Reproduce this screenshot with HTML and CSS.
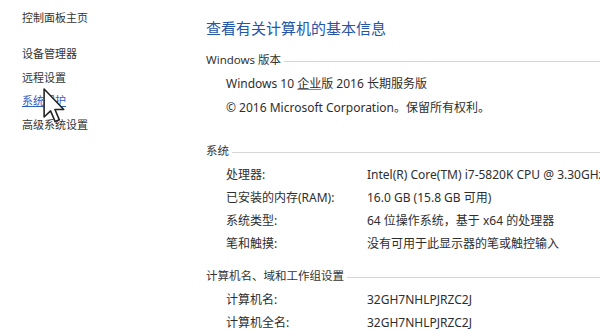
FILE: index.html
```html
<!DOCTYPE html>
<html lang="zh-CN">
<head>
<meta charset="utf-8">
<title>系统</title>
<link rel="stylesheet" href="styles.css">
</head>
<body>
<div class="page">
  <nav class="sidebar">
    <div class="nav-home">控制面板主页</div>
    <ul class="nav-list">
      <li>设备管理器</li>
      <li>远程设置</li>
      <li class="nav-link">系统保护</li>
      <li>高级系统设置</li>
    </ul>
  </nav>
  <main class="main">
    <h1 class="title">查看有关计算机的基本信息</h1>

    <section class="section sec-edition">
      <div class="sec-head"><span>Windows 版本</span><i class="rule"></i></div>
      <div class="line">Windows 10 <span class="ul">企业</span>版 2016 长期服务版</div>
      <div class="line">© 2016 Microsoft Corporation。保留所有权利。</div>
    </section>

    <section class="section sec-system">
      <div class="sec-head"><span>系统</span><i class="rule"></i></div>
      <div class="row"><span class="lbl">处理器:</span><span class="val">Intel(R) Core(TM) i7-5820K CPU @ 3.30GHz</span></div>
      <div class="row"><span class="lbl">已安装的内存(RAM):</span><span class="val">16.0 GB (15.8 GB 可用)</span></div>
      <div class="row"><span class="lbl">系统类型:</span><span class="val">64 位操作系统，基于 x64 的处理器</span></div>
      <div class="row"><span class="lbl">笔和触摸:</span><span class="val">没有可用于此显示器的笔或触控输入</span></div>
    </section>

    <section class="section sec-name">
      <div class="sec-head"><span>计算机名、域和工作组设置</span><i class="rule"></i></div>
      <div class="row"><span class="lbl">计算机名:</span><span class="val">32GH7NHLPJRZC2J</span></div>
      <div class="row"><span class="lbl">计算机全名:</span><span class="val">32GH7NHLPJRZC2J</span></div>
    </section>
  </main>
</div>
<svg class="cursor" width="22" height="35" viewBox="0 0 12.5 20" xmlns="http://www.w3.org/2000/svg">
  <path d="M0.6 0.6 L0.6 16.6 L4.3 13.1 L6.9 19.2 L9.3 18.2 L6.8 12.3 L11.8 12.3 Z" fill="#fff" stroke="#222" stroke-width="0.9" stroke-linejoin="round"/>
</svg>
</body>
</html>
```

FILE: styles.css
```css
html, body {
  margin: 0;
  padding: 0;
  background: #ffffff;
}
body {
  width: 600px;
  height: 331px;
  overflow: hidden;
  position: relative;
  font-family: "Noto Sans", "Noto Sans CJK SC", sans-serif;
  color: #2e2e2e;
}
.page {
  display: flex;
  height: 331px;
}
.sidebar {
  width: 200px;
  flex: none;
  padding: 10px 0 0 22px;
  box-sizing: border-box;
  font-size: 11px;
  color: #333;
}
.nav-home {
  line-height: 16px;
}
.nav-list {
  list-style: none;
  margin: 16px 0 0;
  padding: 0;
}
.nav-list li {
  line-height: 23.5px;
}
.nav-link {
  color: #2f5fc4;
  text-decoration: underline;
}
.main {
  flex: 1;
  min-width: 0;
  padding: 18px 0 0 6px;
  overflow: hidden;
  white-space: nowrap;
}
.title {
  margin: 0;
  font-size: 15px;
  font-weight: normal;
  line-height: 20px;
  color: #2456a6;
}
.section {
  font-size: 12px;
}
.sec-edition { margin-top: 10px; }
.sec-system { margin-top: 19px; }
.sec-name { margin-top: 9px; }
.sec-head {
  display: flex;
  align-items: center;
  line-height: 24px;
  font-size: 11.5px;
  color: #333;
}
.rule {
  flex: 1;
  height: 0;
  border-top: 1px solid #d6d6d6;
  margin-left: 3px;
  margin-top: 2px;
}
.line {
  padding-left: 20px;
  line-height: 24px;
}
.ul {
  text-decoration: underline;
  text-decoration-color: #888;
}
.row {
  display: flex;
  padding-left: 20px;
  line-height: 23px;
}
.lbl {
  width: 141px;
  flex: none;
}
.val {
  flex: none;
}
.cursor {
  position: absolute;
  left: 43px;
  top: 88px;
}
```
